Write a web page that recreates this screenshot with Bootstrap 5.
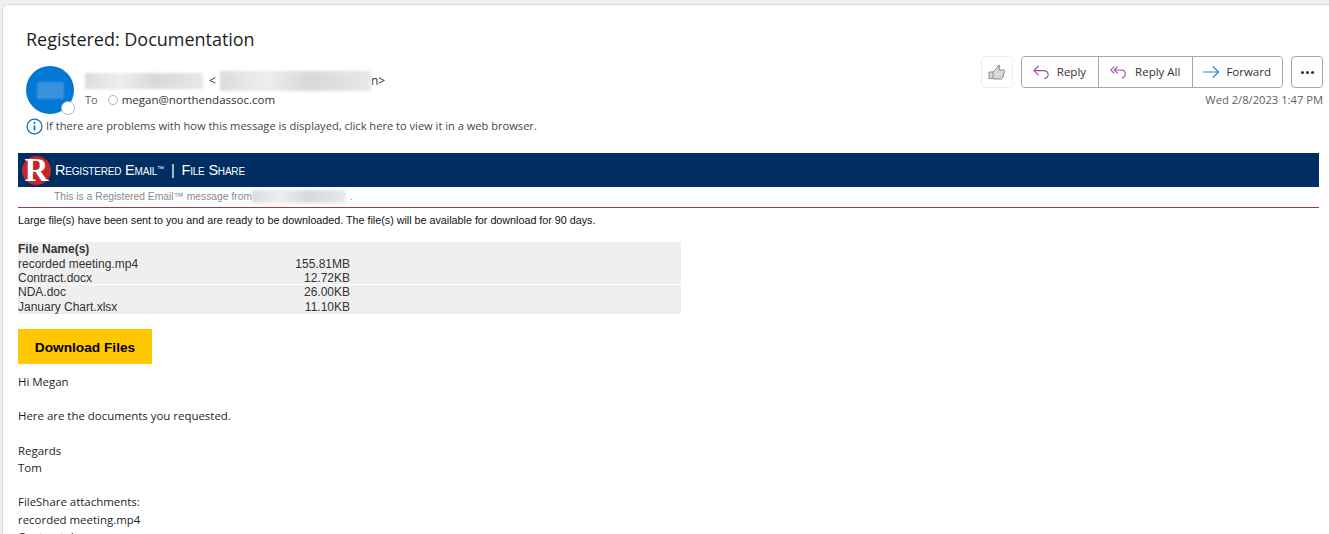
<!DOCTYPE html>
<html lang="en">
<head>
  <meta charset="UTF-8">
  <meta name="viewport" content="width=device-width, initial-scale=1">
  <title>Registered: Documentation</title>
  <link href="https://cdn.jsdelivr.net/npm/bootstrap@5.3.3/dist/css/bootstrap.min.css" rel="stylesheet">
  <style>
    html, body { height: 534px; overflow: hidden; }
    body { background-color: #efefef; padding: 4px 0 0 2px; font-family: "Open Sans", sans-serif; }

    .mail-pane {
      height: 530px;
      overflow: hidden;
      background: #fff;
      border: 1px solid #d9d9d9;
      border-right: 0;
      border-bottom: 0;
      border-top-left-radius: 6px;
    }

    .mail-head { padding: 0 6px 0 23px; }
    .subject { font-size: 18px; line-height: 24px; color: #201f1e; padding-top: 22px; height: 50px; letter-spacing: -.02px; }
    .head-row { height: 63px; }
    .sender-wrap { gap: 11px; }
    .avatar { width: 48px; height: 48px; background: #0078d4; margin-top: 11px; }
    .avatar-mark { width: 27px; height: 17px; background: #3b92dc; filter: blur(1px); }
    .presence {
      width: 14px; height: 14px; right: -1px; bottom: -1px;
      background: #fff; border: 1px solid #a6bccb;
    }
    .sender-line { height: 20px; margin-top: 16px; font-size: 12px; color: #323130; }
    .addr-open { margin-left: 6px; }
    .smudge { display: inline-block; height: 16px; background: linear-gradient(90deg, #dcdcdc, #eeeeee 30%, #d8d8d8 60%, #e8e8e8); filter: blur(1.5px); }
    .to-line { font-size: 11.5px; line-height: 16px; color: #323130; margin-top: 1px; }
    .to-label { color: #605e5c; margin-right: 10px; font-size: 11px; }
    .to-dot { width: 10px; height: 10px; border: 1px solid #9fb8c8; margin-right: 4px; }

    .like-btn { width: 32px; height: 32px; border: 1px solid #ececec; border-radius: 4px; background: #fff; }
    .action-group { height: 32px; border: 1px solid #a8a8a8; border-radius: 4px; font-size: 11.5px; color: #323130; }
    .action-item { padding: 0 11px; gap: 7px; border-right: 1px solid #a8a8a8; }
    .action-item:last-child { border-right: 0; }
    .reply-one { padding-right: 12px; }
    .reply-all { gap: 8px; padding-right: 12px; }
    .reply-fwd { gap: 6px; padding-left: 10px; }
    .more-btn { width: 32px; height: 32px; border: 1px solid #a8a8a8; border-radius: 4px; gap: 2px; }
    .more-btn i { width: 3px; height: 3px; border-radius: 50%; background: #323130; }
    .sent-at { font-size: 11.2px; line-height: 16px; color: #605e5c; margin-top: 4px; text-align: right; }
    .actions-col { margin-top: 1px; }

    .info-line { font-size: 11.1px; line-height: 16px; color: #484644; height: 16px; gap: 3px; }

    .mail-body { padding: 19px 10px 0 15px; }
    .brand-bar { height: 34px; background: #002d62; color: #fff; padding-left: 4px; }
    .brand-logo {
      width: 29px; height: 29px; background: #c4262e; color: #fff;
      font: bold 33px/29px "Liberation Serif", serif;
    }
    .brand-name { font: 14.5px "Liberation Sans", sans-serif; font-variant: small-caps; margin-left: 4px; letter-spacing: -.2px; }
    .brand-mark { font-size: 7px; vertical-align: 4px; }
    .brand-sep { margin: 0 7px; }
    .from-line { font: 10.3px/14px "Liberation Sans", sans-serif; color: #8a8a8a; height: 21px; padding: 3px 0 0 36px; border-bottom: 1px solid #9e3a3a; }
    .notice { font: 10.74px/14px "Liberation Sans", sans-serif; color: #111; margin-top: 5px; height: 29px; }

    .file-box { width: 663px; background: #efefef; }
    .file-tbl { font: 12px/14px "Liberation Sans", sans-serif; color: #333; border-collapse: collapse; }
    .file-tbl th, .file-tbl td { padding: 0; height: 14.4px; }
    .file-tbl th { font-weight: bold; }
    .name-cell { width: 252px; }
    .size-cell { width: 80px; text-align: right; }
    .row-split td, .row-split th { box-shadow: inset 0 -1px 0 #fff; }

    .download-link {
      width: 134px; height: 35px; margin-top: 15px; padding: 2px 0 0 0;
      background: #ffc800; color: #000; border-radius: 0;
      font: bold 13.7px "Liberation Sans", sans-serif;
    }
    .note-text { font-size: 11.45px; line-height: 17.2px; color: #201f1e; margin-top: 9px; }
  </style>
</head>
<body>

  <div class="mail-pane">

    <!-- Header -->
    <div class="mail-head">
      <div class="subject">Registered: Documentation</div>
      <div class="head-row d-flex justify-content-between">
        <div class="sender-wrap d-flex">
          <div class="avatar rounded-circle position-relative d-flex align-items-center justify-content-center">
            <div class="avatar-mark"></div>
            <div class="presence rounded-circle position-absolute"></div>
          </div>
          <div>
            <div class="sender-line d-flex align-items-center">
              <span class="smudge" style="width: 118px"></span>
              <span class="addr-open me-1">&lt;</span>
              <span class="smudge" style="width: 151px; height: 20px"></span>
              <span>n&gt;</span>
            </div>
            <div class="to-line d-flex align-items-center">
              <span class="to-label">To</span>
              <span class="to-dot rounded-circle"></span>
              <span>megan@northendassoc.com</span>
            </div>
          </div>
        </div>
        <div class="actions-col">
          <div class="d-flex gap-2">
            <div class="like-btn d-flex align-items-center justify-content-center">
              <svg width="18" height="16" viewBox="0 0 18 16" fill="#d8d8d8" stroke="#8e8e8e" stroke-width="1"><path d="M1 8h4v6.5H1zM5 8l3.5-3.5L10.5 1l1.2.6-.7 4.4h5l.5 1.2-2 7-1 .8H5"/></svg>
            </div>
            <div class="action-group d-flex">
              <div class="action-item reply-one d-flex align-items-center">
                <svg width="17" height="17" viewBox="0 0 18 17" fill="none" stroke="#a349a4" stroke-width="1.2"><path d="M6 1.5 1 6.5l5 5M1 6.5h10c3 0 5 1.7 5 4.2 0 2.2-1.5 4-4 4.3"/></svg>
                <span>Reply</span>
              </div>
              <div class="action-item reply-all d-flex align-items-center">
                <svg width="17" height="15" viewBox="0 0 20 17" fill="none" stroke="#a349a4" stroke-width="1.3"><path d="M5 1.5 1 5.5l4 4M9 1.5l-4 4 4 4M5 5.5h8c3 0 5 1.9 5 4.5 0 2.4-1.5 4.4-4 4.8"/></svg>
                <span>Reply All</span>
              </div>
              <div class="action-item reply-fwd d-flex align-items-center">
                <svg width="17" height="14" viewBox="0 0 17 14" fill="none" stroke="#2b88c8" stroke-width="1.2"><path d="M0 7h15.5M10 1.5 15.5 7 10 12.5"/></svg>
                <span>Forward</span>
              </div>
            </div>
            <div class="more-btn d-flex align-items-center justify-content-center"><i></i><i></i><i></i></div>
          </div>
          <div class="sent-at">Wed 2/8/2023 1:47 PM</div>
        </div>
      </div>
      <div class="info-line d-flex align-items-center">
        <svg width="17" height="17" viewBox="0 0 16 16" fill="none"><circle cx="8" cy="8" r="7" stroke="#1273b8" stroke-width="1.2"/><path d="M8 6.8v5" stroke="#1273b8" stroke-width="1.6"/><circle cx="8" cy="4.6" r="1" fill="#1273b8"/></svg>
        <span>If there are problems with how this message is displayed, click here to view it in a web browser.</span>
      </div>
    </div>

    <!-- Message body -->
    <div class="mail-body">
      <div class="brand-bar d-flex align-items-center">
        <div class="brand-logo rounded-circle d-flex align-items-center justify-content-center">R</div>
        <div class="brand-name">Registered Email<span class="brand-mark">™</span><span class="brand-sep">|</span>File Share</div>
      </div>
      <div class="from-line d-flex">
        <span>This is a Registered Email™ message from</span>
        <span class="smudge" style="width: 94px; height: 13px"></span>
        <span class="ms-1">.</span>
      </div>
      <div class="notice">Large file(s) have been sent to you and are ready to be downloaded. The file(s) will be available for download for 90 days.</div>

      <div class="file-box">
        <table class="file-tbl w-100">
          <tr><th class="name-cell">File Name(s)</th><th class="size-cell"></th><th></th></tr>
          <tr><td class="name-cell">recorded meeting.mp4</td><td class="size-cell">155.81MB</td><td></td></tr>
          <tr class="row-split"><td class="name-cell">Contract.docx</td><td class="size-cell">12.72KB</td><td></td></tr>
          <tr><td class="name-cell">NDA.doc</td><td class="size-cell">26.00KB</td><td></td></tr>
          <tr><td class="name-cell">January Chart.xlsx</td><td class="size-cell">11.10KB</td><td></td></tr>
        </table>
      </div>

      <a href="#" class="btn download-link d-flex align-items-center justify-content-center">Download Files</a>

      <div class="note-text">
        Hi Megan<br><br>
        Here are the documents you requested.<br><br>
        Regards<br>
        Tom<br><br>
        FileShare attachments:<br>
        recorded meeting.mp4<br>
        Contract.docx
      </div>
    </div>
  </div>

  <script src="https://cdn.jsdelivr.net/npm/bootstrap@5.3.3/dist/js/bootstrap.bundle.min.js"></script>
</body>
</html>
